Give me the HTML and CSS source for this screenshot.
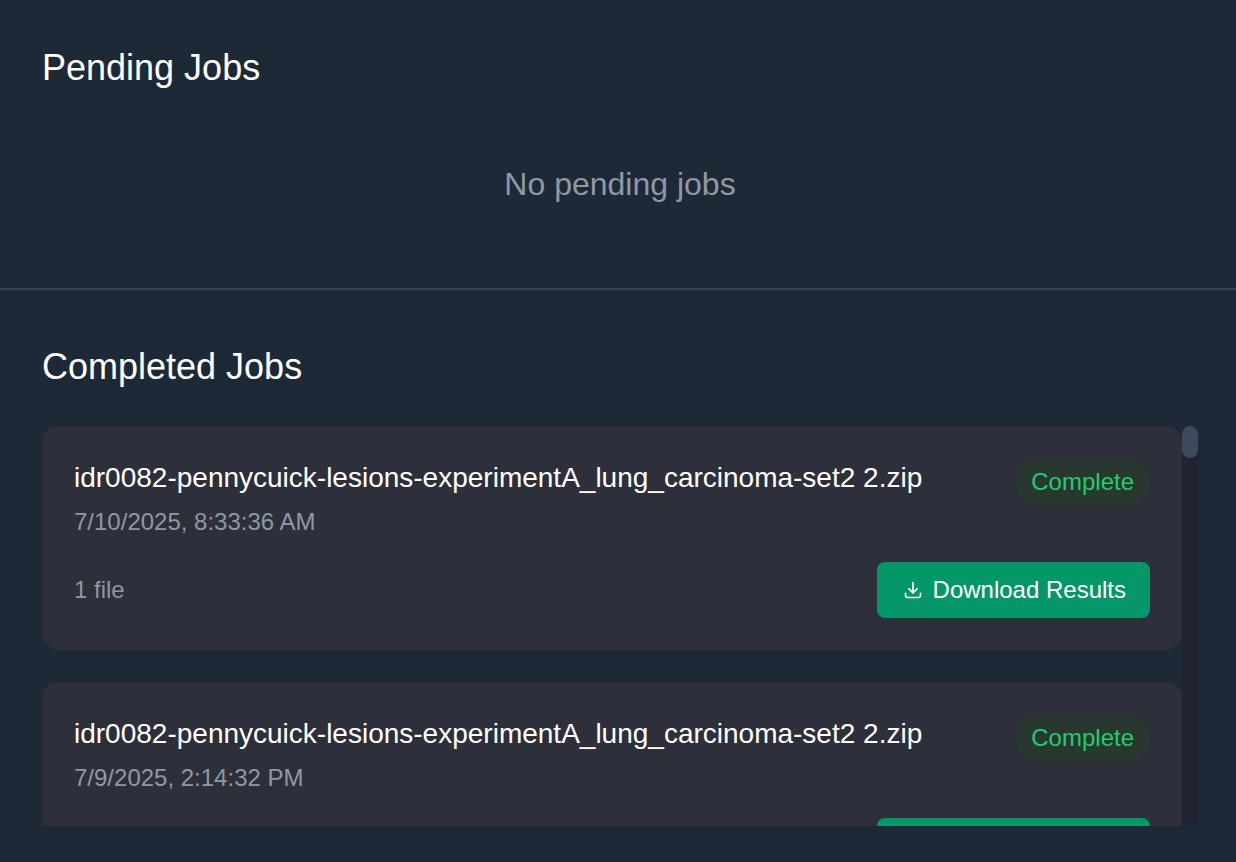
FILE: index.html
```html
<!DOCTYPE html>
<html lang="en">
<head>
    <meta charset="UTF-8">
    <meta name="viewport" content="width=device-width, initial-scale=1.0">
    <title>Jobs</title>
    <link rel="stylesheet" href="styles.css">
</head>
<body>
    <section class="pending">
        <h2 class="section-title">Pending Jobs</h2>
        <p class="empty">No pending jobs</p>
    </section>

    <section class="completed">
        <h2 class="section-title">Completed Jobs</h2>
        <div class="job-scroll">
            <div class="job-list">
                <div class="job-card">
                    <div class="job-top">
                        <div>
                            <div class="job-name">idr0082-pennycuick-lesions-experimentA_lung_carcinoma-set2 2.zip</div>
                            <div class="job-date">7/10/2025, 8:33:36 AM</div>
                        </div>
                        <span class="status">Complete</span>
                    </div>
                    <div class="job-bottom">
                        <span class="file-count">1 file</span>
                        <button class="download">
                            <svg class="download-icon" viewBox="0 0 24 24" fill="none" stroke="currentColor" stroke-width="2" stroke-linecap="round" stroke-linejoin="round"><path d="M12 3v12"/><path d="M7 10.5l5 5 5-5"/><path d="M3 16v2.5A2.5 2.5 0 0 0 5.5 21h13a2.5 2.5 0 0 0 2.5-2.5V16"/></svg>
                            Download Results
                        </button>
                    </div>
                </div>
                <div class="job-card">
                    <div class="job-top">
                        <div>
                            <div class="job-name">idr0082-pennycuick-lesions-experimentA_lung_carcinoma-set2 2.zip</div>
                            <div class="job-date">7/9/2025, 2:14:32 PM</div>
                        </div>
                        <span class="status">Complete</span>
                    </div>
                    <div class="job-bottom">
                        <span class="file-count">1 file</span>
                        <button class="download">
                            <svg class="download-icon" viewBox="0 0 24 24" fill="none" stroke="currentColor" stroke-width="2" stroke-linecap="round" stroke-linejoin="round"><path d="M12 3v12"/><path d="M7 10.5l5 5 5-5"/><path d="M3 16v2.5A2.5 2.5 0 0 0 5.5 21h13a2.5 2.5 0 0 0 2.500-2.500V16"/></svg>
                            Download Results
                        </button>
                    </div>
                </div>
            </div>
            <div class="scrollbar">
                <div class="scrollbar-thumb"></div>
            </div>
        </div>
    </section>
</body>
</html>
```

FILE: styles.css
```css
* {
    box-sizing: border-box;
}

body {
    margin: 0;
    height: 100vh;
    overflow: hidden;
    background-color: #1e2937;
    color: #ffffff;
    font-family: "Liberation Sans", Arial, sans-serif;
}

.section-title {
    margin: 0;
    font-size: 36px;
    line-height: 42px;
    font-weight: 400;
}

.pending {
    height: 290px;
    padding: 47px 38px 0 42px;
    border-bottom: 2px solid #374151;
}

.empty {
    margin: 74px 0 0;
    text-align: center;
    font-size: 32px;
    line-height: 42px;
    color: #8f98a6;
}

.completed {
    padding: 56px 38px 0 42px;
}

.job-scroll {
    display: flex;
    margin-top: 38px;
    height: 400px;
}

.job-list {
    flex: 1;
    display: flex;
    flex-direction: column;
    gap: 32px;
    overflow: hidden;
}

.scrollbar {
    flex: none;
    width: 16px;
    background: #222433;
}

.scrollbar-thumb {
    height: 32px;
    background: #3e4a5b;
    border-radius: 8px;
}

.job-card {
    flex: none;
    height: 224px;
    padding: 32px;
    background-color: #2d2f3b;
    border-radius: 16px;
}

.job-top {
    display: flex;
    justify-content: space-between;
    align-items: flex-start;
}

.job-name {
    font-size: 28px;
    line-height: 40px;
}

.job-date {
    margin-top: 8px;
    font-size: 24px;
    line-height: 32px;
    color: #8f98a6;
}

.status {
    padding: 0 16px;
    height: 48px;
    line-height: 48px;
    border-radius: 24px;
    background-color: #29382f;
    color: #22cc6e;
    font-size: 24px;
}

.job-bottom {
    display: flex;
    justify-content: space-between;
    align-items: center;
    margin-top: 24px;
}

.file-count {
    font-size: 24px;
    color: #8f98a6;
}

.download {
    display: flex;
    align-items: center;
    gap: 10px;
    height: 56px;
    padding: 0 24px 0 26px;
    border: none;
    border-radius: 8px;
    background-color: #059669;
    color: #ffffff;
    font-family: inherit;
    font-size: 24px;
}

.download-icon {
    width: 20px;
    height: 20px;
}
```
